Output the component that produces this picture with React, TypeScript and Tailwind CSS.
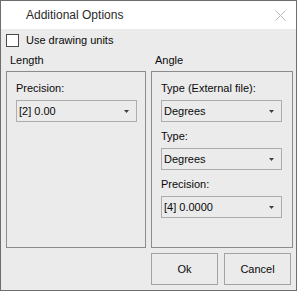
import React from 'react'

function Arrow() {
  return (
    <svg width="5" height="3" viewBox="0 0 5 3" className="shrink-0">
      <path d="M0 0 H5 L2.5 3 Z" fill="#3c3c3c" />
    </svg>
  )
}

function Select({ value }: { value: string }) {
  return (
    <div className="ml-[9px] flex h-[22px] w-[121px] items-center justify-between border border-[#adadad] bg-[#ebebeb] pl-[2px] pr-[7px]">
      <span>{value}</span>
      <Arrow />
    </div>
  )
}

function Field({ label, value, first }: { label: string; value: string; first?: boolean }) {
  return (
    <div className={first ? '' : 'mt-[6px]'}>
      <div className="ml-[9px] h-[16px] leading-[16px]">{label}</div>
      <div className="mt-[4px]">
        <Select value={value} />
      </div>
    </div>
  )
}

export default function App() {
  return (
    <div
      className="flex h-[291px] w-[297px] flex-col border border-[#6e6e6e] text-[11px] text-[#0a0a0a]"
      style={{ fontFamily: '"Liberation Sans", Arial, sans-serif' }}
    >
      {/* title bar */}
      <div className="flex h-[28px] items-center justify-between bg-white pl-[25px] pr-[10px]">
        <span className="text-[12px] text-[#2a2a2a]">Additional Options</span>
        <svg width="11" height="11" viewBox="0 0 11 11">
          <path d="M0.5 0.5 L10.5 10.5 M10.5 0.5 L0.5 10.5" stroke="#b8b8b8" strokeWidth="1" />
        </svg>
      </div>

      {/* body */}
      <div className="flex flex-1 flex-col bg-[#ebebeb] pl-[5px]">
        <div className="mt-[5px] flex h-[13px] items-center gap-[7px]">
          <div className="h-[13px] w-[13px] border border-[#4a4a4a] bg-white" />
          <span>Use drawing units</span>
        </div>

        <div className="mt-[4px] flex gap-[5px]">
          <div className="w-[140px]">
            <div className="ml-[4px] h-[16px] leading-[18px]">Length</div>
            <div className="mt-[4px] h-[177px] border border-[#8c8c8c] pt-[8px]">
              <Field label="Precision:" value="[2] 0.00" first />
            </div>
          </div>
          <div className="w-[142px]">
            <div className="ml-[4px] h-[16px] leading-[18px]">Angle</div>
            <div className="mt-[4px] h-[177px] border border-[#8c8c8c] pt-[8px]">
              <Field label="Type (External file):" value="Degrees" first />
              <Field label="Type:" value="Degrees" />
              <Field label="Precision:" value="[4] 0.0000" />
            </div>
          </div>
        </div>

        <div className="mt-[5px] flex gap-[6px] pl-[145px]">
          <button className="flex h-[32px] w-[67px] items-center justify-center border border-[#a3a3a3] bg-[#ebebeb]">
            Ok
          </button>
          <button className="flex h-[32px] w-[67px] items-center justify-center border border-[#a3a3a3] bg-[#ebebeb]">
            Cancel
          </button>
        </div>
      </div>
    </div>
  )
}
